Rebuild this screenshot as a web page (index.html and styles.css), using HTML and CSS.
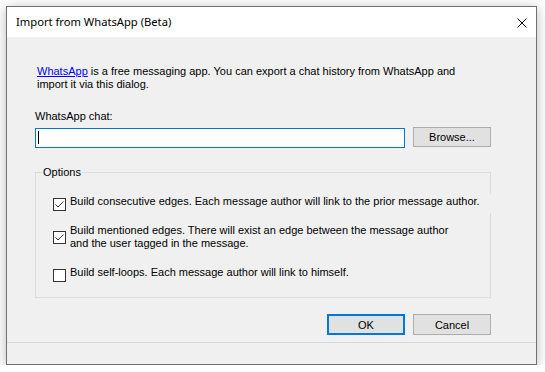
FILE: index.html
```html
<!DOCTYPE html>
<html lang="en">
<head>
  <meta charset="UTF-8" />
  <title>Import from WhatsApp (Beta)</title>
  <link rel="stylesheet" href="styles.css">
</head>
<body>
  <div class="window" role="dialog" aria-label="Import from WhatsApp (Beta)">
    <div class="titlebar">
      <span class="title">Import from WhatsApp (Beta)</span>
      <svg class="close" width="10" height="10" viewBox="0 0 10 10" aria-label="Close">
        <path d="M0.5 0.5 L9.5 9.5 M9.5 0.5 L0.5 9.5" stroke="#000" stroke-width="1" fill="none" />
      </svg>
    </div>

    <main class="content">
      <p class="intro"><a href="#">WhatsApp</a> is a free messaging app. You can export a chat history from WhatsApp and<br>import it via this dialog.</p>

      <div class="field-label">WhatsApp chat:</div>
      <div class="file-row">
        <div class="textbox"><span class="caret"></span></div>
        <button class="btn">Browse...</button>
      </div>

      <div class="group">
        <span class="group-title">Options</span>
        <div class="check single first">
          <span class="box"><svg width="11" height="11" viewBox="0 0 11 11"><path d="M1.5 5.5 L4 8 L9.5 2.5" stroke="#333" stroke-width="1" fill="none" /></svg></span>
          <span class="check-text">Build consecutive edges. Each message author will link to the prior message author.</span>
        </div>
        <div class="check double">
          <span class="box"><svg width="11" height="11" viewBox="0 0 11 11"><path d="M1.5 5.5 L4 8 L9.5 2.5" stroke="#333" stroke-width="1" fill="none" /></svg></span>
          <span class="check-text">Build mentioned edges. There will exist an edge between the message author<br>and the user tagged in the message.</span>
        </div>
        <div class="check single last">
          <span class="box"></span>
          <span class="check-text">Build self-loops. Each message author will link to himself.</span>
        </div>
      </div>

      <div class="actions">
        <button class="btn default">OK</button>
        <button class="btn">Cancel</button>
      </div>
    </main>

    <div class="statusbar"></div>
  </div>
</body>
</html>
```

FILE: styles.css
```css
/* Reset */
* {
  box-sizing: border-box;
  margin: 0;
  padding: 0;
}
body {
  background: #fff;
  font-family: 'Liberation Sans', Arial, sans-serif;
  font-size: 11px;
  line-height: 13px;
  color: #000;
}
.window {
  margin: 6px 0 0 6px;
  width: 531px;
  height: 359px;
  border: 1px solid #717171;
  background: #f0f0f0;
  box-shadow: 0 2px 12px rgba(0, 0, 0, 0.28);
  display: flex;
  flex-direction: column;
}
/* Title bar */
.titlebar {
  height: 30px;
  background: #fff;
  display: flex;
  align-items: center;
  justify-content: space-between;
  padding: 0 9px 0 9px;
}
.title {
  font-family: 'Noto Sans', 'Open Sans', sans-serif;
  font-size: 11.2px;
  line-height: 16px;
}
.close {
  display: block;
  margin-top: 1px;
}
/* Dialog body */
.content {
  flex: 1;
  padding: 28px 45px 0 28px;
}
.intro {
  margin-left: 2px;
}
.intro a {
  color: #0000ff;
  text-decoration: underline;
}
.field-label {
  margin-top: 19px;
}
.file-row {
  display: flex;
  align-items: flex-start;
  gap: 8px;
  margin-top: 4px;
}
.textbox {
  width: 370px;
  height: 20px;
  margin-top: 1px;
  background: #fff;
  border: 1px solid #0078d7;
  padding: 2px 0 0 2px;
}
.caret {
  display: block;
  width: 1px;
  height: 13px;
  background: #000;
}
.btn {
  width: 78px;
  height: 20px;
  background: #e1e1e1;
  border: 1px solid #adadad;
  font-family: inherit;
  font-size: 11px;
  color: #000;
}
.btn.default {
  border: 2px solid #0078d7;
}
.actions .btn {
  height: 21px;
}
/* Options group */
.group {
  position: relative;
  margin-top: 24px;
  border: 1px solid #dcdcdc;
  padding: 22px 0 15px 17px;
}
.group-title {
  position: absolute;
  top: -7px;
  left: 6px;
  padding: 0 1px;
  background: #f0f0f0;
}
.check {
  display: flex;
  gap: 4px;
  background: #f0f0f0;
}
.check.single {
  align-items: flex-start;
}
.check.double {
  align-items: center;
  margin-top: 11px;
}
.check.first {
  margin-top: -1px;
  padding-top: 1px;
  height: 19px;
  margin-right: -4px;
}
.check.last {
  margin-top: 16px;
}
.box {
  flex: none;
  width: 13px;
  height: 13px;
  border: 1px solid #333;
  background: #fff;
}
.box svg {
  display: block;
}
.check.single .box {
  margin-top: 3px;
}
.check-text {
  white-space: nowrap;
}
/* Buttons and status strip */
.actions {
  display: flex;
  justify-content: flex-end;
  gap: 8px;
  margin-top: 16px;
}
.statusbar {
  height: 22px;
  border-top: 1px solid #d9d9d9;
}
```
